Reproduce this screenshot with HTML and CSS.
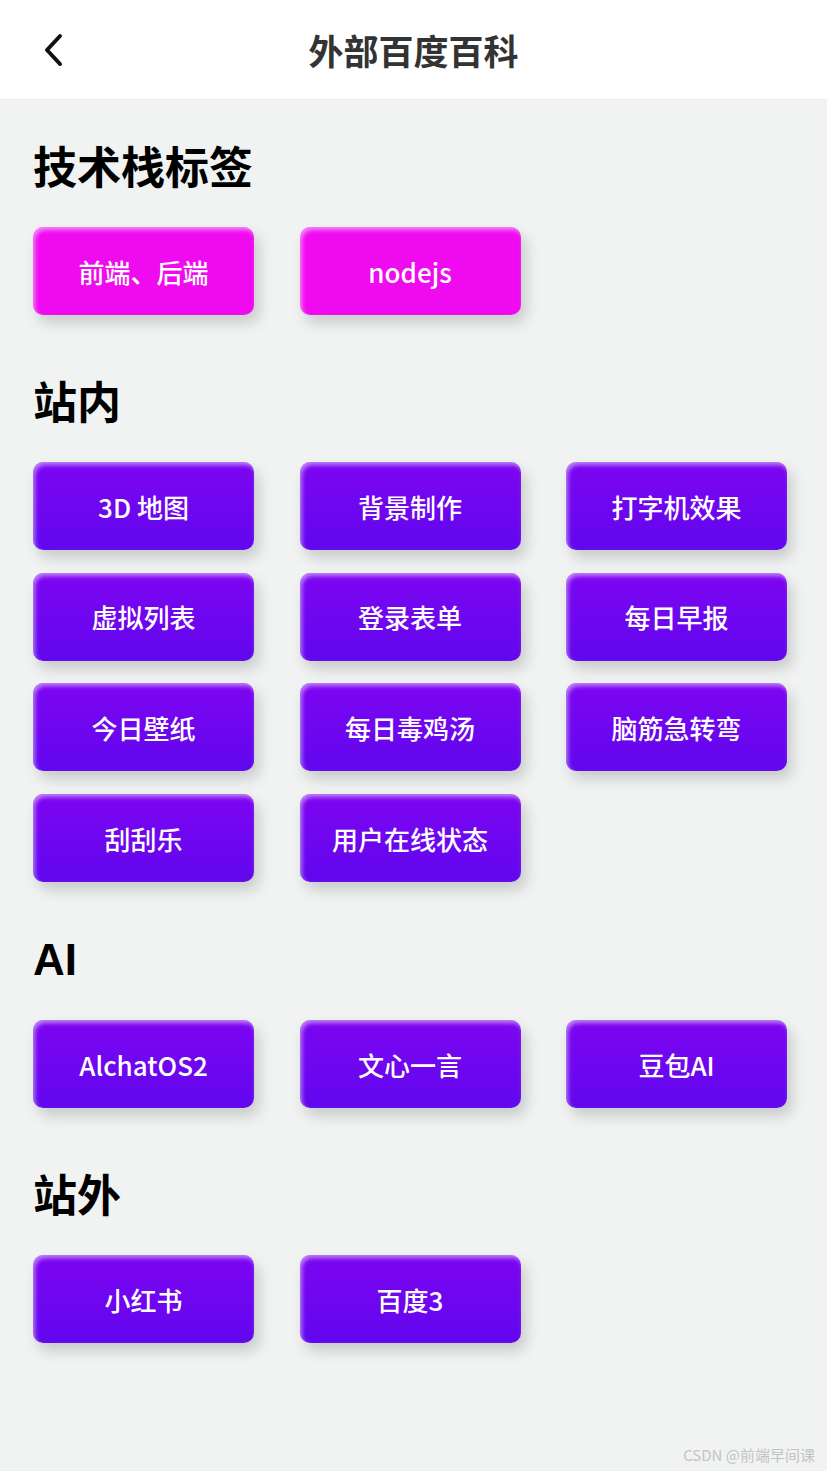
FILE: index.html
```html
<!DOCTYPE html>
<html lang="zh-CN">
<head>
  <meta charset="UTF-8" />
  <meta name="viewport" content="width=device-width, initial-scale=1" />
  <title>外部百度百科</title>
  <link rel="stylesheet" href="styles.css">
</head>
<body>
  <header class="nav-bar">
    <a class="back" href="#">
      <svg width="22" height="34" viewBox="0 0 22 34">
        <polyline points="18,3 5,17 18,31" fill="none" stroke="#111" stroke-width="4" stroke-linecap="round" stroke-linejoin="round" />
      </svg>
    </a>
    <h1 class="nav-title">外部百度百科</h1>
    <span></span>
  </header>

  <main class="content">
    <section class="group">
      <h2 class="group-title">技术栈标签</h2>
      <div class="tag-grid">
        <a class="tag tag-pink" href="#">前端、后端</a>
        <a class="tag tag-pink" href="#">nodejs</a>
      </div>
    </section>

    <section class="group">
      <h2 class="group-title">站内</h2>
      <div class="tag-grid">
        <a class="tag" href="#">3D 地图</a>
        <a class="tag" href="#">背景制作</a>
        <a class="tag" href="#">打字机效果</a>
        <a class="tag" href="#">虚拟列表</a>
        <a class="tag" href="#">登录表单</a>
        <a class="tag" href="#">每日早报</a>
        <a class="tag" href="#">今日壁纸</a>
        <a class="tag" href="#">每日毒鸡汤</a>
        <a class="tag" href="#">脑筋急转弯</a>
        <a class="tag" href="#">刮刮乐</a>
        <a class="tag" href="#">用户在线状态</a>
      </div>
    </section>

    <section class="group">
      <h2 class="group-title">AI</h2>
      <div class="tag-grid">
        <a class="tag" href="#">AlchatOS2</a>
        <a class="tag" href="#">文心一言</a>
        <a class="tag" href="#">豆包AI</a>
      </div>
    </section>

    <section class="group">
      <h2 class="group-title">站外</h2>
      <div class="tag-grid">
        <a class="tag" href="#">小红书</a>
        <a class="tag" href="#">百度3</a>
      </div>
    </section>
  </main>

  <div class="watermark">CSDN @前端早间课</div>
</body>
</html>
```

FILE: styles.css
```css
html, body {
  margin: 0;
  padding: 0;
}
body {
  font-family: "Noto Sans CJK SC", "Noto Sans", sans-serif;
  background: #f1f3f2;
  min-height: 100vh;
  position: relative;
  color: #000;
}
.nav-bar {
  height: 100px;
  background: #fff;
  border-bottom: 1px solid #ebeded;
  box-sizing: border-box;
  display: grid;
  grid-template-columns: 100px 1fr 100px;
  align-items: center;
}
.back {
  display: flex;
  align-items: center;
  padding-left: 42px;
  height: 100%;
}
.nav-title {
  margin: 0;
  text-align: center;
  font-size: 35px;
  font-weight: 700;
  color: #333;
  line-height: 1;
}
.content {
  padding: 33px 33px 100px;
}
.group + .group {
  margin-top: 53px;
}
.group-title {
  margin: 0 0 30px;
  min-height: 55px;
  font-family: "Liberation Sans", "Noto Sans CJK SC", sans-serif;
  font-size: 44px;
  font-weight: 700;
  line-height: normal;
}
.tag-grid {
  display: grid;
  grid-template-columns: repeat(3, 221px);
  column-gap: 45.5px;
  row-gap: 22.7px;
}
.tag {
  height: 88px;
  border-radius: 10px;
  display: flex;
  align-items: center;
  justify-content: center;
  color: #fff;
  text-decoration: none;
  font-size: 26px;
  font-weight: 500;
  background: linear-gradient(180deg, #7d05f1 0%, #6107ee 100%);
  box-shadow: inset 2px 3px 4px rgba(255, 255, 255, 0.5),
              5px 8px 14px rgba(0, 0, 0, 0.17);
}
.tag-pink {
  background: #ef0aef;
}
.watermark {
  position: absolute;
  right: 12px;
  bottom: 6px;
  font-size: 15px;
  color: #c4c4c4;
}
```
